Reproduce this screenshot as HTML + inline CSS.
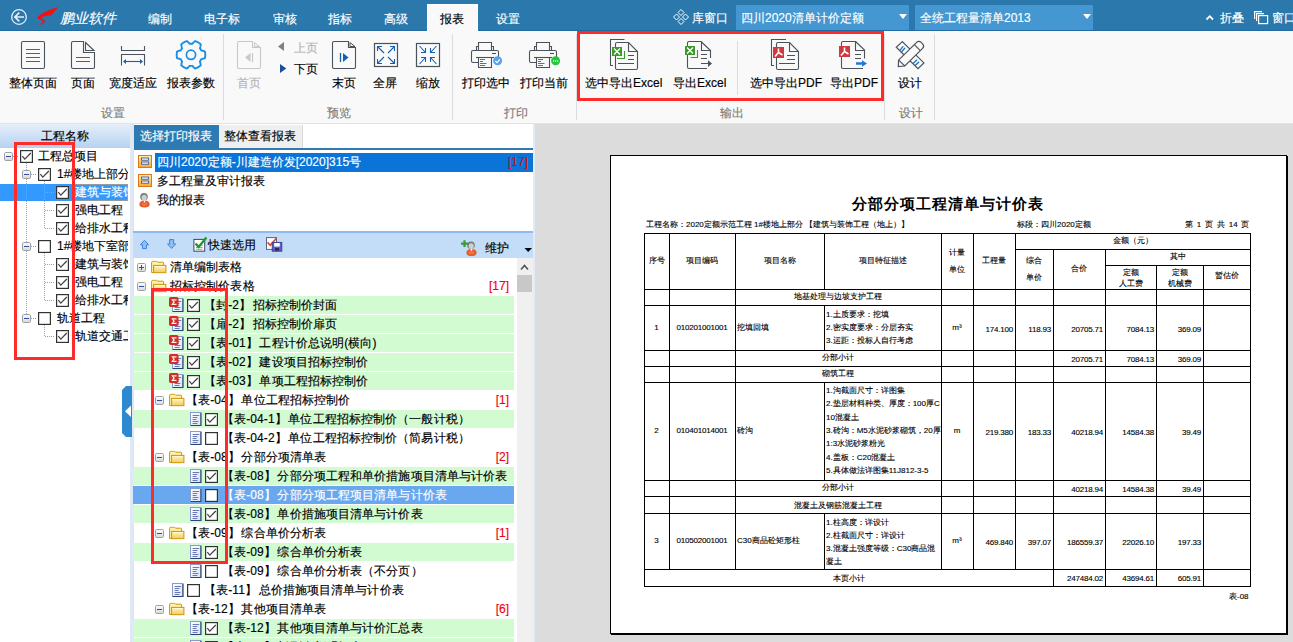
<!DOCTYPE html>
<html><head><meta charset="utf-8"><style>
*{box-sizing:border-box}
html,body{margin:0;padding:0}
body{width:1293px;height:642px;overflow:hidden;position:relative;background:#f9f9f9;font-family:"Liberation Sans",sans-serif;font-size:12px;color:#000}
.a{position:absolute}
.t{position:absolute;white-space:nowrap;line-height:14px;-webkit-text-stroke:0.15px currentColor}
.w{color:#fff}
.g{color:#7c7c7c}
.c{text-align:center}
.r{color:#f00010}
.d{position:absolute;white-space:nowrap;font-size:8px;line-height:10px;-webkit-text-stroke:0.12px #000}
.n{letter-spacing:-0.2px}
</style></head><body>
<div class="a" style="left:0px;top:0px;width:1293px;height:31px;background:#2a78ac;border-bottom:1px solid #1f6aa0"></div>
<div class="a" style="left:0px;top:31px;width:1293px;height:1px;background:#fff"></div>
<div class="a" style="left:427px;top:4px;width:51px;height:28px;background:#f9f9f9;border:1px solid #fff;border-bottom:none"></div>
<div class="a" style="left:736px;top:5px;width:173px;height:25px;background:#4497d0"></div>
<div class="a" style="left:915px;top:5px;width:178px;height:25px;background:#4497d0"></div>
<div class="a" style="left:0px;top:123px;width:1293px;height:1px;background:#e2e2e2"></div>
<div class="a" style="left:0px;top:124px;width:130px;height:518px;background:#fff"></div>
<div class="a" style="left:0px;top:124px;width:130px;height:24px;background:linear-gradient(#e6effa,#b6d2f1)"></div>
<div class="a" style="left:130px;top:124px;width:4px;height:518px;background:#dfe9f5"></div>
<div class="a" style="left:0px;top:184px;width:128px;height:17px;background:#3399ff"></div>
<div class="a" style="left:133px;top:124px;width:400px;height:518px;background:#fff"></div>
<div class="a" style="left:133px;top:124px;width:1px;height:518px;background:#d6e4f3"></div>
<div class="a" style="left:134px;top:125px;width:85px;height:23px;background:#2e7ab2"></div>
<div class="a" style="left:219px;top:125px;width:84px;height:23px;background:#efefef;border-right:1px solid #dadada"></div>
<div class="a" style="left:134px;top:148px;width:399px;height:2px;background:#2e7ab2"></div>
<div class="a" style="left:155px;top:153px;width:378px;height:19px;background:#0a74d8"></div>
<div class="a" style="left:133px;top:231px;width:400px;height:2px;background:#8ebaf0"></div>
<div class="a" style="left:133px;top:233px;width:400px;height:25px;background:#c3dcf7"></div>
<div class="a" style="left:517px;top:258px;width:16px;height:384px;background:#f0f0f0"></div>
<div class="a" style="left:517px;top:275px;width:15px;height:17px;background:#c8c8c8"></div>
<div class="a" style="left:533px;top:124px;width:2px;height:518px;background:#e3ecf6"></div>
<div class="a" style="left:535px;top:124px;width:758px;height:518px;background:#dcdcdc"></div>
<div class="a" style="left:610px;top:155px;width:677px;height:479px;background:#fff;border:1px solid #000;box-shadow:1px 1px 0 #000"></div>
<div class="a" style="left:133px;top:296px;width:381px;height:18px;background:#d2fbd2"></div>
<div class="a" style="left:133px;top:315px;width:381px;height:18px;background:#d2fbd2"></div>
<div class="a" style="left:133px;top:334px;width:381px;height:18px;background:#d2fbd2"></div>
<div class="a" style="left:133px;top:353px;width:381px;height:18px;background:#d2fbd2"></div>
<div class="a" style="left:133px;top:372px;width:381px;height:18px;background:#d2fbd2"></div>
<div class="a" style="left:133px;top:410px;width:381px;height:18px;background:#d2fbd2"></div>
<div class="a" style="left:133px;top:467px;width:381px;height:18px;background:#d2fbd2"></div>
<div class="a" style="left:133px;top:486px;width:381px;height:18px;background:#69a7ee"></div>
<div class="a" style="left:133px;top:505px;width:381px;height:18px;background:#d2fbd2"></div>
<div class="a" style="left:133px;top:543px;width:381px;height:18px;background:#d2fbd2"></div>
<div class="a" style="left:133px;top:619px;width:381px;height:18px;background:#d2fbd2"></div>
<div class="a" style="left:133px;top:638px;width:381px;height:18px;background:#d2fbd2"></div>
<div class="t w" style="left:60px;top:10px;font-size:14px;line-height:16px;font-style:italic">鹏业软件</div>
<div class="t w" style="left:148px;top:12px;">编制</div>
<div class="t w" style="left:204px;top:12px;">电子标</div>
<div class="t w" style="left:273px;top:12px;">审核</div>
<div class="t w" style="left:328px;top:12px;">指标</div>
<div class="t w" style="left:384px;top:12px;">高级</div>
<div class="t w" style="left:496px;top:12px;">设置</div>
<div class="t w" style="left:692px;top:11px;">库窗口</div>
<div class="t w" style="left:741px;top:11px;">四川2020清单计价定额</div>
<div class="t w" style="left:920px;top:11px;">全统工程量清单2013</div>
<div class="t w" style="left:1220px;top:11px;">折叠</div>
<div class="t w" style="left:1272px;top:11px;">窗口</div>
<div class="t " style="left:440px;top:12px;">报表</div>
<div class="t " style="left:9px;top:76px;">整体页面</div>
<div class="t " style="left:71px;top:76px;">页面</div>
<div class="t " style="left:109px;top:76px;">宽度适应</div>
<div class="t " style="left:167px;top:76px;">报表参数</div>
<div class="t " style="left:237px;top:76px;color:#b4b4b4">首页</div>
<div class="t " style="left:332px;top:76px;">末页</div>
<div class="t " style="left:373px;top:76px;">全屏</div>
<div class="t " style="left:416px;top:76px;">缩放</div>
<div class="t " style="left:462px;top:76px;">打印选中</div>
<div class="t " style="left:520px;top:76px;">打印当前</div>
<div class="t " style="left:585px;top:76px;">选中导出Excel</div>
<div class="t " style="left:673px;top:76px;">导出Excel</div>
<div class="t " style="left:750px;top:76px;">选中导出PDF</div>
<div class="t " style="left:830px;top:76px;">导出PDF</div>
<div class="t " style="left:898px;top:76px;">设计</div>
<div class="t " style="left:294px;top:41px;color:#b4b4b4">上页</div>
<div class="t " style="left:294px;top:62px;">下页</div>
<div class="t g" style="left:101px;top:106px;">设置</div>
<div class="t g" style="left:327px;top:106px;">预览</div>
<div class="t g" style="left:504px;top:106px;">打印</div>
<div class="t g" style="left:720px;top:106px;">输出</div>
<div class="t g" style="left:899px;top:106px;">设计</div>
<div class="t " style="left:41px;top:129px;">工程名称</div>
<div class="a" style="left:0;top:148px;width:128px;height:220px;overflow:hidden">
<div class="t " style="left:38px;top:1px;">工程总项目</div>
<div class="t " style="left:57px;top:19px;">1#楼地上部分</div>
<div class="t w" style="left:75px;top:37px;">建筑与装饰工程</div>
<div class="t " style="left:75px;top:55px;">强电工程</div>
<div class="t " style="left:75px;top:73px;">给排水工程</div>
<div class="t " style="left:57px;top:91px;">1#楼地下室部分</div>
<div class="t " style="left:75px;top:109px;">建筑与装饰工程</div>
<div class="t " style="left:75px;top:127px;">强电工程</div>
<div class="t " style="left:75px;top:145px;">给排水工程</div>
<div class="t " style="left:57px;top:163px;">轨道工程</div>
<div class="t " style="left:75px;top:181px;">轨道交通工程</div>
</div>
<div class="t w" style="left:140px;top:129px;">选择打印报表</div>
<div class="t " style="left:224px;top:129px;">整体查看报表</div>
<div class="t w" style="left:157px;top:155px;">四川2020定额-川建造价发[2020]315号</div>
<div class="t r" style="left:508px;top:155px;">[17]</div>
<div class="t " style="left:157px;top:174px;">多工程量及审计报表</div>
<div class="t " style="left:157px;top:193px;">我的报表</div>
<div class="t " style="left:208px;top:238px;">快速选用</div>
<div class="t " style="left:485px;top:241px;">维护</div>
<div class="a" style="left:133px;top:258px;width:384px;height:384px;overflow:hidden">
<div class="t " style="left:37px;top:2px;letter-spacing:0.1px">清单编制表格</div>
<div class="t " style="left:37px;top:21px;letter-spacing:0.1px">招标控制价表格</div>
<div class="t r" style="left:276px;top:21px;width:100px;text-align:right">[17]</div>
<div class="t " style="left:71px;top:40px;letter-spacing:0.1px">【封-2】<i style="margin-right:1.5px"></i>招标控制价封面</div>
<div class="t " style="left:71px;top:59px;letter-spacing:0.1px">【扉-2】<i style="margin-right:1.5px"></i>招标控制价扉页</div>
<div class="t " style="left:71px;top:78px;letter-spacing:0.1px">【表-01】<i style="margin-right:1.5px"></i>工程计价总说明(横向)</div>
<div class="t " style="left:71px;top:97px;letter-spacing:0.1px">【表-02】<i style="margin-right:1.5px"></i>建设项目招标控制价</div>
<div class="t " style="left:71px;top:116px;letter-spacing:0.1px">【表-03】<i style="margin-right:1.5px"></i>单项工程招标控制价</div>
<div class="t " style="left:53px;top:135px;letter-spacing:0.1px">【表-04】<i style="margin-right:1.5px"></i>单位工程招标控制价</div>
<div class="t r" style="left:276px;top:135px;width:100px;text-align:right">[1]</div>
<div class="t " style="left:89px;top:154px;letter-spacing:0.1px">【表-04-1】<i style="margin-right:1.5px"></i>单位工程招标控制价（一般计税）</div>
<div class="t " style="left:89px;top:173px;letter-spacing:0.1px">【表-04-2】<i style="margin-right:1.5px"></i>单位工程招标控制价（简易计税）</div>
<div class="t " style="left:53px;top:192px;letter-spacing:0.1px">【表-08】<i style="margin-right:1.5px"></i>分部分项清单表</div>
<div class="t r" style="left:276px;top:192px;width:100px;text-align:right">[2]</div>
<div class="t " style="left:89px;top:211px;letter-spacing:0.1px">【表-08】<i style="margin-right:1.5px"></i>分部分项工程和单价措施项目清单与计价表</div>
<div class="t w" style="left:89px;top:230px;letter-spacing:0.1px">【表-08】<i style="margin-right:1.5px"></i>分部分项工程项目清单与计价表</div>
<div class="t " style="left:89px;top:249px;letter-spacing:0.1px">【表-08】<i style="margin-right:1.5px"></i>单价措施项目清单与计价表</div>
<div class="t " style="left:53px;top:268px;letter-spacing:0.1px">【表-09】<i style="margin-right:1.5px"></i>综合单价分析表</div>
<div class="t r" style="left:276px;top:268px;width:100px;text-align:right">[1]</div>
<div class="t " style="left:89px;top:287px;letter-spacing:0.1px">【表-09】<i style="margin-right:1.5px"></i>综合单价分析表</div>
<div class="t " style="left:89px;top:306px;letter-spacing:0.1px">【表-09】<i style="margin-right:1.5px"></i>综合单价分析表（不分页）</div>
<div class="t " style="left:71px;top:325px;letter-spacing:0.1px">【表-11】<i style="margin-right:1.5px"></i>总价措施项目清单与计价表</div>
<div class="t " style="left:53px;top:344px;letter-spacing:0.1px">【表-12】<i style="margin-right:1.5px"></i>其他项目清单表</div>
<div class="t r" style="left:276px;top:344px;width:100px;text-align:right">[6]</div>
<div class="t " style="left:89px;top:363px;letter-spacing:0.1px">【表-12】<i style="margin-right:1.5px"></i>其他项目清单与计价汇总表</div>
<div class="t " style="left:89px;top:382px;letter-spacing:0.1px">【表-12】<i style="margin-right:1.5px"></i>暂列金额明细表</div>
</div>
<div class="t" style="left:852px;top:195px;font-size:15px;line-height:18px;letter-spacing:1px;font-weight:bold;-webkit-text-stroke:0">分部分项工程清单与计价表</div>
<div class="d" style="left:646px;top:220px;">工程名称：2020定额示范工程 1#楼地上部分 【建筑与装饰工程（地上）】</div>
<div class="d" style="left:1017px;top:220px;">标段：四川2020定额</div>
<div class="d" style="left:1185px;top:220px;word-spacing:1.6px">第 1 页 共 14 页</div>
<div class="d" style="left:1229px;top:592px;">表-08</div>
<div class="d" style="left:644px;top:256px;width:25px;text-align:center;">序号</div>
<div class="d" style="left:669px;top:256px;width:66px;text-align:center;">项目编码</div>
<div class="d" style="left:735px;top:256px;width:89px;text-align:center;">项目名称</div>
<div class="d" style="left:824px;top:256px;width:117px;text-align:center;">项目特征描述</div>
<div class="d" style="left:941px;top:248px;width:32px;text-align:center;">计量</div>
<div class="d" style="left:941px;top:265px;width:32px;text-align:center;">单位</div>
<div class="d" style="left:973px;top:256px;width:42px;text-align:center;">工程量</div>
<div class="d" style="left:1015px;top:236px;width:235px;text-align:center;">金额（元）</div>
<div class="d" style="left:1015px;top:256px;width:38px;text-align:center;">综合</div>
<div class="d" style="left:1015px;top:272.5px;width:38px;text-align:center;">单价</div>
<div class="d" style="left:1053px;top:264px;width:52px;text-align:center;">合价</div>
<div class="d" style="left:1105px;top:252px;width:145px;text-align:center;">其中</div>
<div class="d" style="left:1105px;top:267.5px;width:51px;text-align:center;">定额</div>
<div class="d" style="left:1105px;top:279px;width:51px;text-align:center;">人工费</div>
<div class="d" style="left:1156px;top:267.5px;width:47px;text-align:center;">定额</div>
<div class="d" style="left:1156px;top:279px;width:47px;text-align:center;">机械费</div>
<div class="d" style="left:1203px;top:271px;width:47px;text-align:center;">暂估价</div>
<div class="d" style="left:735px;top:292px;width:206px;text-align:center;">地基处理与边坡支护工程</div>
<div class="d" style="left:644px;top:323px;width:25px;text-align:center;">1</div>
<div class="d" style="left:669px;top:323px;width:66px;text-align:center;letter-spacing:-0.2px">010201001001</div>
<div class="d" style="left:737px;top:323px;">挖填回填</div>
<div class="d" style="left:826px;top:310px;">1.土质要求：挖填</div>
<div class="d" style="left:826px;top:323px;">2.密实度要求：分层夯实</div>
<div class="d" style="left:826px;top:336px;">3.运距：投标人自行考虑</div>
<div class="d" style="left:941px;top:323px;width:32px;text-align:center;">m³</div>
<div class="d n" style="left:935px;top:324.5px;width:78px;text-align:right">174.100</div>
<div class="d n" style="left:973px;top:324.5px;width:78px;text-align:right">118.93</div>
<div class="d n" style="left:1025px;top:324.5px;width:78px;text-align:right">20705.71</div>
<div class="d n" style="left:1076px;top:324.5px;width:78px;text-align:right">7084.13</div>
<div class="d n" style="left:1123px;top:324.5px;width:78px;text-align:right">369.09</div>
<div class="d" style="left:735px;top:353px;width:206px;text-align:center;">分部小计</div>
<div class="d n" style="left:1025px;top:354.5px;width:78px;text-align:right">20705.71</div>
<div class="d n" style="left:1076px;top:354.5px;width:78px;text-align:right">7084.13</div>
<div class="d n" style="left:1123px;top:354.5px;width:78px;text-align:right">369.09</div>
<div class="d" style="left:735px;top:369px;width:206px;text-align:center;">砌筑工程</div>
<div class="d" style="left:644px;top:426px;width:25px;text-align:center;">2</div>
<div class="d" style="left:669px;top:426px;width:66px;text-align:center;letter-spacing:-0.2px">010401014001</div>
<div class="d" style="left:737px;top:426px;">砖沟</div>
<div class="d" style="left:826px;top:386.0px;">1.沟截面尺寸：详图集</div>
<div class="d" style="left:826px;top:399.3px;">2.垫层材料种类、厚度：100厚C</div>
<div class="d" style="left:826px;top:412.6px;">10混凝土</div>
<div class="d" style="left:826px;top:425.9px;">3.砖沟：M5水泥砂浆砌筑，20厚</div>
<div class="d" style="left:826px;top:439.2px;">1:3水泥砂浆粉光</div>
<div class="d" style="left:826px;top:452.5px;">4.盖板：C20混凝土</div>
<div class="d" style="left:826px;top:465.8px;">5.具体做法详图集11J812-3-5</div>
<div class="d" style="left:941px;top:426px;width:32px;text-align:center;">m</div>
<div class="d n" style="left:935px;top:427.5px;width:78px;text-align:right">219.380</div>
<div class="d n" style="left:973px;top:427.5px;width:78px;text-align:right">183.33</div>
<div class="d n" style="left:1025px;top:427.5px;width:78px;text-align:right">40218.94</div>
<div class="d n" style="left:1076px;top:427.5px;width:78px;text-align:right">14584.38</div>
<div class="d n" style="left:1123px;top:427.5px;width:78px;text-align:right">39.49</div>
<div class="d" style="left:735px;top:483px;width:206px;text-align:center;">分部小计</div>
<div class="d n" style="left:1025px;top:484.5px;width:78px;text-align:right">40218.94</div>
<div class="d n" style="left:1076px;top:484.5px;width:78px;text-align:right">14584.38</div>
<div class="d n" style="left:1123px;top:484.5px;width:78px;text-align:right">39.49</div>
<div class="d" style="left:735px;top:500.5px;width:206px;text-align:center;">混凝土及钢筋混凝土工程</div>
<div class="d" style="left:644px;top:536px;width:25px;text-align:center;">3</div>
<div class="d" style="left:669px;top:536px;width:66px;text-align:center;letter-spacing:-0.2px">010502001001</div>
<div class="d" style="left:737px;top:536px;">C30商品砼矩形柱</div>
<div class="d" style="left:826px;top:518px;">1.柱高度：详设计</div>
<div class="d" style="left:826px;top:531px;">2.柱截面尺寸：详设计</div>
<div class="d" style="left:826px;top:544px;">3.混凝土强度等级：C30商品混</div>
<div class="d" style="left:826px;top:557px;">凝土</div>
<div class="d" style="left:941px;top:536px;width:32px;text-align:center;">m³</div>
<div class="d n" style="left:935px;top:537.5px;width:78px;text-align:right">469.840</div>
<div class="d n" style="left:973px;top:537.5px;width:78px;text-align:right">397.07</div>
<div class="d n" style="left:1025px;top:537.5px;width:78px;text-align:right">186559.37</div>
<div class="d n" style="left:1076px;top:537.5px;width:78px;text-align:right">22026.10</div>
<div class="d n" style="left:1123px;top:537.5px;width:78px;text-align:right">197.33</div>
<div class="d" style="left:644px;top:573.5px;width:409px;text-align:center;">本页小计</div>
<div class="d n" style="left:1025px;top:573.5px;width:78px;text-align:right">247484.02</div>
<div class="d n" style="left:1076px;top:573.5px;width:78px;text-align:right">43694.61</div>
<div class="d n" style="left:1123px;top:573.5px;width:78px;text-align:right">605.91</div>
<svg class="a" style="left:0;top:0" width="1293" height="642" viewBox="0 0 1293 642"><defs>
<symbol id="ck" viewBox="0 0 13 13" width="13" height="13"><rect x="0.6" y="0.6" width="11.8" height="11.8" fill="#fff" stroke="#333" stroke-width="1.2"/><path d="M2.3 6.2L4.8 9.1L10.8 3" fill="none" stroke="#444" stroke-width="1.3"/></symbol>
<symbol id="cb" viewBox="0 0 13 13" width="13" height="13"><rect x="0.6" y="0.6" width="11.8" height="11.8" fill="#fff" stroke="#333" stroke-width="1.2"/></symbol>
<linearGradient id="gx" x1="0" y1="0" x2="0" y2="1"><stop offset="0" stop-color="#fdfdfd"/><stop offset="1" stop-color="#d8d8d8"/></linearGradient>
<symbol id="mn" viewBox="0 0 9 9" width="9" height="9"><rect x="0.5" y="0.5" width="8" height="8" rx="1.2" fill="url(#gx)" stroke="#a0a0a0"/><path d="M2 4.5H7" stroke="#3050a8" stroke-width="1"/></symbol>
<symbol id="pl" viewBox="0 0 9 9" width="9" height="9"><rect x="0.5" y="0.5" width="8" height="8" rx="1.2" fill="url(#gx)" stroke="#a0a0a0"/><path d="M2 4.5H7M4.5 2V7" stroke="#3050a8" stroke-width="1"/></symbol>
<linearGradient id="gf" x1="0" y1="0" x2="0" y2="1"><stop offset="0" stop-color="#fff4c0"/><stop offset="1" stop-color="#f2cc5a"/></linearGradient>
<symbol id="fd" viewBox="0 0 16 13" width="16" height="13"><path d="M0.6 12V2.1Q0.6 0.7 1.8 0.7H5.6L6.6 1.7H11.8Q12.6 1.7 12.6 2.5V12Z" fill="#fff2a8" stroke="#c99512" stroke-width="1"/><rect x="2.6" y="4.9" width="12.3" height="7.4" fill="url(#gf)" stroke="#c99512" stroke-width="1"/><path d="M3.6 6.2H13.8" stroke="#fffbe8" stroke-width="0.8"/></symbol>
<linearGradient id="gd" x1="0" y1="0" x2="1" y2="1"><stop offset="0" stop-color="#ffffff"/><stop offset="1" stop-color="#d8e2fa"/></linearGradient>
<symbol id="doc" viewBox="0 0 12 14" width="12" height="14"><rect x="0.5" y="0.5" width="10.5" height="13" fill="url(#gd)" stroke="#8a9ad0"/><path d="M10.9 1V13.5H0.8" fill="none" stroke="#2c4474" stroke-width="1.1"/><path d="M2.6 3.5H9.2M2.6 5.5H7.4M2.6 7.5H6.5M2.6 9.5H8.4M2.6 11.5H7.4" stroke="#5a6aac" stroke-width="0.9"/></symbol>
<symbol id="sig" viewBox="0 0 15 15" width="15" height="15"><use href="#doc" x="3" y="1"/><rect x="0" y="0" width="9.5" height="10" rx="1.8" fill="#d42a2a"/><path d="M2.2 2.2H7.5V3.4H4.3L6 5.1L4.3 6.8H7.5V8H2.2L4.2 5.1Z" fill="#fff6e0"/></symbol>
<linearGradient id="go" x1="0" y1="0" x2="0" y2="1"><stop offset="0" stop-color="#fff0a8"/><stop offset="1" stop-color="#f8a830"/></linearGradient>
<symbol id="rep" viewBox="0 0 14 13" width="14" height="13"><rect x="0.5" y="0.5" width="13" height="12" fill="url(#go)" stroke="#e07818"/><rect x="3.5" y="3" width="7" height="2.2" fill="#fff" stroke="#3a5aa8" stroke-width="0.9"/><rect x="3.5" y="7" width="7" height="2.2" fill="#fff" stroke="#3a5aa8" stroke-width="0.9"/></symbol>
<symbol id="usr" viewBox="0 0 12 16" width="12" height="16"><path d="M0.4 11.8Q0.4 7.9 5.5 7.9Q10.6 7.9 10.6 11.8Q10.6 15 5.5 15Q0.4 15 0.4 11.8Z" fill="#e35b2c"/><ellipse cx="5.5" cy="11.5" rx="3" ry="2" fill="#f08050" opacity="0.6"/><circle cx="5" cy="4.2" r="3.8" fill="#7a7a7a"/><ellipse cx="5.2" cy="5.1" rx="2.6" ry="2.9" fill="#cfcfcf"/><path d="M4.3 7.9L5.5 10.3L6.7 7.9Z" fill="#fff"/></symbol>
</defs><path d="M223.5 34V120" stroke="#dcdcdc"/><path d="M452.5 34V120" stroke="#dcdcdc"/><path d="M576.5 34V120" stroke="#dcdcdc"/><path d="M884.5 34V120" stroke="#dcdcdc"/><path d="M934.5 34V120" stroke="#dcdcdc"/><path d="M737.5 41V95" stroke="#dcdcdc"/><rect x="21.5" y="41.5" width="23" height="27" rx="1.5" fill="none" stroke="#4b525a" stroke-width="1.1"/><path d="M26 49.5H40M26 53.5H40M26 57.5H40M26 61.5H40" stroke="#1a6fb8" stroke-width="1.1"/><path d="M83.5 41.5H73Q71.5 41.5 71.5 43V67Q71.5 68.5 73 68.5H93Q94.5 68.5 94.5 67V52.5H83.5Z" fill="none" stroke="#4b525a" stroke-width="1.1"/><path d="M85.5 42.5L94 50.5H85.5Z" fill="none" stroke="#4b525a" stroke-width="1.1"/><path d="M76 57.5H90M76 61.5H90" stroke="#1a6fb8" stroke-width="1.1"/><path d="M121.5 46V50.5H144.5V46M121.5 65.5V54.5H144.5V65.5" fill="none" stroke="#4b525a" stroke-width="1.1"/><path d="M124 61.5H142" stroke="#1560b0" stroke-width="1.1"/><path d="M123 61.5L126 59V64Z M143 61.5L140 59V64Z" fill="#1560b0"/><path d="M205.30 54.80 L205.30 55.05 L205.29 55.30 L205.28 55.55 L205.27 55.80 L205.25 56.05 L205.22 56.29 L205.19 56.54 L205.16 56.79 L205.12 57.04 L205.08 57.28 L205.04 57.53 L204.99 57.77 L204.93 58.02 L204.56 58.18 L204.19 58.34 L203.82 58.48 L203.45 58.61 L203.08 58.72 L202.71 58.83 L202.33 58.92 L201.96 59.01 L201.59 59.08 L201.22 59.14 L201.14 59.31 L201.06 59.49 L200.98 59.67 L200.89 59.84 L200.80 60.01 L200.71 60.18 L200.61 60.35 L200.51 60.52 L200.41 60.68 L200.31 60.85 L200.20 61.01 L200.09 61.17 L199.98 61.32 L199.86 61.48 L200.00 61.83 L200.12 62.19 L200.24 62.55 L200.34 62.92 L200.44 63.30 L200.52 63.68 L200.60 64.07 L200.66 64.46 L200.71 64.86 L200.75 65.26 L200.57 65.43 L200.38 65.59 L200.19 65.75 L200.00 65.91 L199.80 66.07 L199.61 66.22 L199.41 66.37 L199.20 66.51 L199.00 66.66 L198.79 66.79 L198.58 66.93 L198.37 67.06 L198.15 67.18 L197.93 67.31 L197.71 67.43 L197.49 67.54 L197.27 67.65 L197.04 67.76 L196.82 67.86 L196.59 67.96 L196.36 68.06 L196.12 68.15 L195.89 68.24 L195.66 68.32 L195.42 68.40 L195.18 68.48 L194.85 68.24 L194.54 67.99 L194.23 67.74 L193.93 67.49 L193.64 67.22 L193.36 66.95 L193.09 66.68 L192.84 66.40 L192.59 66.11 L192.35 65.82 L192.16 65.84 L191.97 65.86 L191.77 65.87 L191.58 65.88 L191.39 65.89 L191.19 65.90 L191.00 65.90 L190.81 65.90 L190.61 65.89 L190.42 65.88 L190.23 65.87 L190.03 65.86 L189.84 65.84 L189.65 65.82 L189.41 66.11 L189.16 66.40 L188.91 66.68 L188.64 66.95 L188.36 67.22 L188.07 67.49 L187.77 67.74 L187.46 67.99 L187.15 68.24 L186.82 68.48 L186.58 68.40 L186.34 68.32 L186.11 68.24 L185.88 68.15 L185.64 68.06 L185.41 67.96 L185.18 67.86 L184.96 67.76 L184.73 67.65 L184.51 67.54 L184.29 67.43 L184.07 67.31 L183.85 67.18 L183.63 67.06 L183.42 66.93 L183.21 66.79 L183.00 66.66 L182.80 66.51 L182.59 66.37 L182.39 66.22 L182.20 66.07 L182.00 65.91 L181.81 65.75 L181.62 65.59 L181.43 65.43 L181.25 65.26 L181.29 64.86 L181.34 64.46 L181.40 64.07 L181.48 63.68 L181.56 63.30 L181.66 62.92 L181.76 62.55 L181.88 62.19 L182.00 61.83 L182.14 61.48 L182.02 61.32 L181.91 61.17 L181.80 61.01 L181.69 60.85 L181.59 60.68 L181.49 60.52 L181.39 60.35 L181.29 60.18 L181.20 60.01 L181.11 59.84 L181.02 59.67 L180.94 59.49 L180.86 59.31 L180.78 59.14 L180.41 59.08 L180.04 59.01 L179.67 58.92 L179.29 58.83 L178.92 58.72 L178.55 58.61 L178.18 58.48 L177.81 58.34 L177.44 58.18 L177.07 58.02 L177.01 57.77 L176.96 57.53 L176.92 57.28 L176.88 57.04 L176.84 56.79 L176.81 56.54 L176.78 56.29 L176.75 56.05 L176.73 55.80 L176.72 55.55 L176.71 55.30 L176.70 55.05 L176.70 54.80 L176.70 54.55 L176.71 54.30 L176.72 54.05 L176.73 53.80 L176.75 53.55 L176.78 53.31 L176.81 53.06 L176.84 52.81 L176.88 52.56 L176.92 52.32 L176.96 52.07 L177.01 51.83 L177.07 51.58 L177.44 51.42 L177.81 51.26 L178.18 51.12 L178.55 50.99 L178.92 50.88 L179.29 50.77 L179.67 50.68 L180.04 50.59 L180.41 50.52 L180.78 50.46 L180.86 50.29 L180.94 50.11 L181.02 49.93 L181.11 49.76 L181.20 49.59 L181.29 49.42 L181.39 49.25 L181.49 49.08 L181.59 48.92 L181.69 48.75 L181.80 48.59 L181.91 48.43 L182.02 48.28 L182.14 48.12 L182.00 47.77 L181.88 47.41 L181.76 47.05 L181.66 46.68 L181.56 46.30 L181.48 45.92 L181.40 45.53 L181.34 45.14 L181.29 44.74 L181.25 44.34 L181.43 44.17 L181.62 44.01 L181.81 43.85 L182.00 43.69 L182.20 43.53 L182.39 43.38 L182.59 43.23 L182.80 43.09 L183.00 42.94 L183.21 42.81 L183.42 42.67 L183.63 42.54 L183.85 42.42 L184.07 42.29 L184.29 42.17 L184.51 42.06 L184.73 41.95 L184.96 41.84 L185.18 41.74 L185.41 41.64 L185.64 41.54 L185.88 41.45 L186.11 41.36 L186.34 41.28 L186.58 41.20 L186.82 41.12 L187.15 41.36 L187.46 41.61 L187.77 41.86 L188.07 42.11 L188.36 42.38 L188.64 42.65 L188.91 42.92 L189.16 43.20 L189.41 43.49 L189.65 43.78 L189.84 43.76 L190.03 43.74 L190.23 43.73 L190.42 43.72 L190.61 43.71 L190.81 43.70 L191.00 43.70 L191.19 43.70 L191.39 43.71 L191.58 43.72 L191.77 43.73 L191.97 43.74 L192.16 43.76 L192.35 43.78 L192.59 43.49 L192.84 43.20 L193.09 42.92 L193.36 42.65 L193.64 42.38 L193.93 42.11 L194.23 41.86 L194.54 41.61 L194.85 41.36 L195.18 41.12 L195.42 41.20 L195.66 41.28 L195.89 41.36 L196.12 41.45 L196.36 41.54 L196.59 41.64 L196.82 41.74 L197.04 41.84 L197.27 41.95 L197.49 42.06 L197.71 42.17 L197.93 42.29 L198.15 42.42 L198.37 42.54 L198.58 42.67 L198.79 42.81 L199.00 42.94 L199.20 43.09 L199.41 43.23 L199.61 43.38 L199.80 43.53 L200.00 43.69 L200.19 43.85 L200.38 44.01 L200.57 44.17 L200.75 44.34 L200.71 44.74 L200.66 45.14 L200.60 45.53 L200.52 45.92 L200.44 46.30 L200.34 46.68 L200.24 47.05 L200.12 47.41 L200.00 47.77 L199.86 48.12 L199.98 48.28 L200.09 48.43 L200.20 48.59 L200.31 48.75 L200.41 48.92 L200.51 49.08 L200.61 49.25 L200.71 49.42 L200.80 49.59 L200.89 49.76 L200.98 49.93 L201.06 50.11 L201.14 50.29 L201.22 50.46 L201.59 50.52 L201.96 50.59 L202.33 50.68 L202.71 50.77 L203.08 50.88 L203.45 50.99 L203.82 51.12 L204.19 51.26 L204.56 51.42 L204.93 51.58 L204.99 51.83 L205.04 52.07 L205.08 52.32 L205.12 52.56 L205.16 52.81 L205.19 53.06 L205.22 53.31 L205.25 53.55 L205.27 53.80 L205.28 54.05 L205.29 54.30 L205.30 54.55Z" fill="none" stroke="#1a8ee0" stroke-width="1.9" stroke-linejoin="round"/><circle cx="191" cy="54.8" r="4.6" fill="none" stroke="#1a8ee0" stroke-width="1.7"/><path d="M252.5 41.5H239Q237.5 41.5 237.5 43V67Q237.5 68.5 239 68.5H259Q260.5 68.5 260.5 67V47.5H252.5Z" fill="none" stroke="#c8c8c8" stroke-width="1.1"/><path d="M254.5 42.5L259.5 46.5H254.5Z" fill="none" stroke="#c8c8c8" stroke-width="1"/><path d="M250.5 53V62L245 57.5Z" fill="#c8c8c8"/><path d="M252.5 53V62" stroke="#c8c8c8" stroke-width="1.2"/><path d="M284 42V51L278 46.5Z" fill="#808080"/><path d="M280 64V73L286.3 68.5Z" fill="#1a4f9a"/><path d="M348.5 41.5H334Q332.5 41.5 332.5 43V67Q332.5 68.5 334 68.5H354Q355.5 68.5 355.5 67V47.5H348.5Z" fill="none" stroke="#4b525a" stroke-width="1.1"/><path d="M350 42.5L355 46.5H350Z" fill="none" stroke="#4b525a" stroke-width="1"/><path d="M340.5 53V62" stroke="#1560b0" stroke-width="1.3"/><path d="M343 53V62L348.5 57.5Z" fill="#1560b0"/><rect x="374.5" y="43.5" width="23" height="23" fill="none" stroke="#4b525a" stroke-width="1.2"/><g stroke="#1560b0" stroke-width="1.1" fill="none"><path d="M377.5 51V46.5H382M377.5 46.5L384 53"/><path d="M394.5 51V46.5H390M394.5 46.5L388 53"/><path d="M377.5 59V63.5H382M377.5 63.5L384 57"/><path d="M394.5 59V63.5H390M394.5 63.5L388 57"/></g><rect x="416.5" y="43.5" width="23" height="23" fill="none" stroke="#4b525a" stroke-width="1.2"/><g stroke="#1560b0" stroke-width="1.1" fill="none"><path d="M419.5 46L425.5 52.5M425.5 48V52.5H421"/><path d="M436.5 46L430.5 52.5M430.5 48V52.5H435"/><path d="M419.5 64L425.5 57.5M425.5 62V57.5H421"/><path d="M436.5 64L430.5 57.5M430.5 62V57.5H435"/></g><g transform="translate(0,0)"><path d="M478.5 50V42.5H491.5V50" fill="none" stroke="#4b525a" stroke-width="1.1"/><path d="M476.5 50V46.5H478.5M491.5 46.5H493.5V50" fill="none" stroke="#4b525a" stroke-width="1.1"/><path d="M478 62.5H473Q471.5 62.5 471.5 61V52Q471.5 50.5 473 50.5H497Q498.5 50.5 498.5 52V59" fill="none" stroke="#4b525a" stroke-width="1.1"/><path d="M476 57.5H494" stroke="#4b525a" stroke-width="1.1"/><path d="M478.5 57.5V67.5H491.5V57.5" fill="none" stroke="#4b525a" stroke-width="1.1"/><path d="M492 53.5H496" stroke="#4b525a" stroke-width="1.1"/><path d="M480 59.5H485M480 61.5H483M480 63.5H486.5M480 65.5H485" stroke="#1a6fb8" stroke-width="0.9"/><circle cx="497.6" cy="60.8" r="4.5" fill="#5aa0f0"/><path d="M495.3 60.9L497 62.6L500 59.4" fill="none" stroke="#fff" stroke-width="1.2"/></g><g transform="translate(58,0)"><path d="M478.5 50V42.5H491.5V50" fill="none" stroke="#4b525a" stroke-width="1.1"/><path d="M476.5 50V46.5H478.5M491.5 46.5H493.5V50" fill="none" stroke="#4b525a" stroke-width="1.1"/><path d="M478 62.5H473Q471.5 62.5 471.5 61V52Q471.5 50.5 473 50.5H497Q498.5 50.5 498.5 52V59" fill="none" stroke="#4b525a" stroke-width="1.1"/><path d="M476 57.5H494" stroke="#4b525a" stroke-width="1.1"/><path d="M478.5 57.5V67.5H491.5V57.5" fill="none" stroke="#4b525a" stroke-width="1.1"/><path d="M492 53.5H496" stroke="#4b525a" stroke-width="1.1"/><path d="M480 59.5H485M480 61.5H483M480 63.5H486.5M480 65.5H485" stroke="#1a6fb8" stroke-width="0.9"/><circle cx="497.6" cy="60.8" r="4.5" fill="#22c83a"/><circle cx="495.6" cy="61" r="0.7" fill="#fff"/><circle cx="497.6" cy="61" r="0.7" fill="#fff"/><circle cx="499.6" cy="61" r="0.7" fill="#fff"/></g><path d="M624.5 39.5H610.5V65.5H613" fill="none" stroke="#4b525a" stroke-width="1.1"/><path d="M628.5 42.5H617Q615.5 42.5 615.5 44V68Q615.5 69.5 617 69.5H636Q637.5 69.5 637.5 68V51.5Z" fill="#f9f9f9" stroke="#4b525a" stroke-width="1.1"/><path d="M628.5 42.5V51.5H637.5" fill="none" stroke="#4b525a" stroke-width="1.1"/><path d="M628 55.5H634M628 59.5H634M618 63.5H634" stroke="#4b525a" stroke-width="1.1"/><rect x="612" y="47" width="10" height="9" fill="#3a9a2a"/><path d="M614 48.5L620 54.5M620 48.5L614 54.5" stroke="#fff" stroke-width="1.3"/><path d="M624.5 51V58.5H617" fill="none" stroke="#3a9a2a" stroke-width="1.1"/><path d="M701 41.5H689Q687.5 41.5 687.5 43V67Q687.5 68.5 689 68.5H707M710.5 58V50.5L701 41.5" fill="none" stroke="#4b525a" stroke-width="1.1"/><path d="M701.5 41.5V50.5H710.5" fill="none" stroke="#4b525a" stroke-width="1.1"/><path d="M701 54.5H707M701 58.5H707M701 63.5H708.5" stroke="#4b525a" stroke-width="1.1"/><path d="M708 60.3L712 63.5L708 67Z" fill="#4b525a"/><rect x="685" y="46" width="10" height="9" fill="#3a9a2a"/><path d="M687 47.5L693 53.5M693 47.5L687 53.5" stroke="#fff" stroke-width="1.3"/><path d="M697.5 50V57.5H690.5" fill="none" stroke="#3a9a2a" stroke-width="1.1"/><path d="M786 39.5H771.5V65.5H774" fill="none" stroke="#4b525a" stroke-width="1.1"/><path d="M789.5 42.5H778Q776.5 42.5 776.5 44V68Q776.5 69.5 778 69.5H797Q798.5 69.5 798.5 68V51.5Z" fill="#f9f9f9" stroke="#4b525a" stroke-width="1.1"/><path d="M789.5 42.5V51.5H798.5" fill="none" stroke="#4b525a" stroke-width="1.1"/><path d="M787 55.5H795M787 59.5H795M779 63.5H795" stroke="#4b525a" stroke-width="1.1"/><rect x="773" y="47" width="11" height="11" fill="#d03a3e"/><path d="M778.5 48.5V52.5M778.5 52.5L775 56.5M778.5 52.5L782.5 55" stroke="#fff" stroke-width="1.6" fill="none"/><path d="M855.5 41.5H843Q841.5 41.5 841.5 43V67Q841.5 68.5 843 68.5H863M864.5 58.5V50L855.5 41.5" fill="none" stroke="#4b525a" stroke-width="1.1"/><path d="M855.5 41.5V50.5H864.5" fill="none" stroke="#4b525a" stroke-width="1.1"/><path d="M855 54.5H861M855 58.5H861" stroke="#4b525a" stroke-width="1.1"/><path d="M856 62.3H862V60.3L867 63.6L862 66.8V64.8H856Z" fill="#1a78e0"/><rect x="839" y="46" width="11" height="11" fill="#d03a3e"/><path d="M844.5 47.5V51.5M844.5 51.5L841 55.5M844.5 51.5L848.5 54" stroke="#fff" stroke-width="1.6" fill="none"/><path d="M902.3 41.6L896.3 47.2L918 68.6L923.9 62.9Z" fill="none" stroke="#4b525a" stroke-width="1.2"/><path d="M900.2 49.8L902.9 46.6M901.9 51.5L904.7 48.3M913.4 63.2L916.8 60.1M915.4 65.2L918.7 62.3" stroke="#1a70c0" stroke-width="1.3" stroke-linecap="round"/><path d="M898.6 60.1L916.6 42.4Q918.9 40.2 921.2 42.4L922.6 43.8Q924.8 46.1 922.6 48.3L904.8 66Z" fill="#f9f9f9" stroke="#4b525a" stroke-width="1.2"/><path d="M898.6 60.1L898.3 66.6L904.8 66M914.6 44.9L920.3 50.6" fill="none" stroke="#4b525a" stroke-width="1.2"/><circle cx="19" cy="17" r="7.3" fill="none" stroke="#e8eef4" stroke-width="1.3"/><path d="M24 17H15.5M19.3 12.6L14.9 17L19.3 21.4" fill="none" stroke="#e8eef4" stroke-width="1.7"/><path d="M58.2 7 C53 8.5 44 11.5 38.6 16 C36.8 17.6 37.4 18.9 40 19.7 C43 20.6 43.8 21.6 42 23 C41 23.8 39.5 24.4 37.8 24.9 C41.5 24.7 44.6 23.4 44.9 21.5 C45.1 19.8 42.2 19 40.6 18.2 C44 16 47.5 15 51 15.6 C53.5 12.6 56 9.6 58.2 7Z" fill="#f51010"/><g fill="none" stroke="#fff" stroke-width="1"><path d="M681 9.5L684 12.5L681 15.5L678 12.5Z"/><path d="M681 18.5L684 21.5L681 24.5L678 21.5Z"/><path d="M676.5 14L679.5 17L676.5 20L673.5 17Z"/><path d="M685.5 14L688.5 17L685.5 20L682.5 17Z"/></g><path d="M899 14H907L903 19Z" fill="#fff"/><path d="M1083 14H1091L1087 19Z" fill="#fff"/><path d="M1206.5 19.5L1209.8 16.2L1213 19.5" fill="none" stroke="#fff" stroke-width="1.8"/><g fill="none" stroke="#fff" stroke-width="1.2"><path d="M1254.6 19V11.6H1262"/><path d="M1256.6 21V13.6H1264"/><rect x="1258.6" y="15.6" width="9" height="8"/></g><g stroke="#a0a0a0" stroke-width="1" stroke-dasharray="1 1"><path d="M26.5 163V318M27 174.5H37M27 246.5H37M27 318.5H37"/><path d="M44.5 181V228M45 192.5H55M45 210.5H55M45 228.5H55"/><path d="M44.5 253V300M45 264.5H55M45 282.5H55M45 300.5H55"/><path d="M44.5 325V336M45 336.5H55"/><path d="M13 156.5H19"/></g><use href="#mn" x="4" y="152"/><use href="#ck" x="20" y="150"/><use href="#mn" x="22" y="170"/><use href="#ck" x="38" y="168"/><use href="#ck" x="56" y="186"/><use href="#ck" x="56" y="204"/><use href="#ck" x="56" y="222"/><use href="#mn" x="22" y="242"/><use href="#cb" x="38" y="240"/><use href="#ck" x="56" y="258"/><use href="#ck" x="56" y="276"/><use href="#ck" x="56" y="294"/><use href="#mn" x="22" y="314"/><use href="#cb" x="38" y="312"/><use href="#ck" x="56" y="330"/><rect x="74.5" y="184.5" width="53" height="16" fill="none" stroke="#f0a040" stroke-width="1" stroke-dasharray="1 1"/><use href="#rep" x="138" y="155"/><use href="#rep" x="138" y="174"/><use href="#usr" x="139" y="192.5"/><path d="M144.5 240.3L148.6 244.8H146.5V248.6H142.5V244.8H140.4Z" fill="#8cc0f8" stroke="#3a78d8" stroke-width="0.9" stroke-linejoin="round"/><path d="M171.6 248.4L175.7 243.9H173.6V239.6H169.6V243.9H167.5Z" fill="#8cc0f8" stroke="#3a78d8" stroke-width="0.9" stroke-linejoin="round"/><rect x="193.9" y="239.4" width="10.8" height="11.8" fill="#fff" stroke="#3a4466" stroke-width="1"/><path d="M196 245.5H202.5M196 247.5H202.5M196 249.3H202.5" stroke="#6a80c0" stroke-width="0.8"/><path d="M195.6 243.4L198.6 247L206.4 237.6" fill="none" stroke="#1f9a1f" stroke-width="2.3"/><rect x="266.5" y="237.6" width="10" height="11.8" fill="#fff" stroke="#5a6488" stroke-width="1"/><path d="M267.6 242.4L270.2 245.2L276.4 238.2" fill="none" stroke="#e84020" stroke-width="1.6"/><rect x="272.2" y="242.4" width="9.6" height="8.8" fill="#5b5fc8" stroke="#343c90" stroke-width="0.9"/><rect x="274.2" y="243" width="5.6" height="3.6" fill="#fff"/><rect x="275" y="248" width="4" height="2.6" fill="#2a2a60"/><use href="#usr" x="466" y="241"/><path d="M461 243.6H468M464.5 240.2V247" stroke="#3a9a3a" stroke-width="2.2"/><path d="M524.5 248H532L528.2 252Z" fill="#000"/><path d="M521 269.5L524.5 265.5L528 269.5" fill="none" stroke="#505050" stroke-width="1.5"/><use href="#pl" x="137" y="263"/><use href="#fd" x="151" y="260.5"/><use href="#mn" x="137" y="282"/><use href="#fd" x="151" y="279.5"/><use href="#sig" x="169" y="297"/><use href="#ck" x="187" y="299"/><use href="#sig" x="169" y="316"/><use href="#ck" x="187" y="318"/><use href="#sig" x="169" y="335"/><use href="#ck" x="187" y="337"/><use href="#sig" x="169" y="354"/><use href="#ck" x="187" y="356"/><use href="#sig" x="169" y="373"/><use href="#ck" x="187" y="375"/><use href="#mn" x="155" y="396"/><use href="#fd" x="169" y="393.5"/><use href="#doc" x="190" y="412"/><use href="#ck" x="205" y="413"/><use href="#doc" x="190" y="431"/><use href="#cb" x="205" y="432"/><use href="#mn" x="155" y="453"/><use href="#fd" x="169" y="450.5"/><use href="#doc" x="190" y="469"/><use href="#ck" x="205" y="470"/><use href="#doc" x="190" y="488"/><use href="#cb" x="205" y="489"/><use href="#doc" x="190" y="507"/><use href="#ck" x="205" y="508"/><use href="#mn" x="155" y="529"/><use href="#fd" x="169" y="526.5"/><use href="#doc" x="190" y="545"/><use href="#ck" x="205" y="546"/><use href="#doc" x="190" y="564"/><use href="#cb" x="205" y="565"/><use href="#doc" x="172" y="583"/><use href="#cb" x="187" y="584"/><use href="#mn" x="155" y="605"/><use href="#fd" x="169" y="602.5"/><use href="#doc" x="190" y="621"/><use href="#ck" x="205" y="622"/><use href="#doc" x="190" y="640"/><use href="#ck" x="205" y="641"/><path d="M126 386H132V437H126L122 433V390Z" fill="#2e8ad0"/><path d="M131 405.5V417L125 411.2Z" fill="#fff"/><path d="M644 233.5H1251M1015 249.5H1251M1105 265.5H1251M644 289.5H1251M644 305.5H1251M644 350.5H1251M644 366.5H1251M644 382.5H1251M644 480.5H1251M644 496.5H1251M644 513.5H1251M644 569.5H1251M644 586.5H1251M644.5 233V587M1250.5 233V587M669.5 233V570M735.5 233V570M941.5 233V570M973.5 233V570M1015.5 233V570M824.5 233V290M824.5 305V351M824.5 382V481M824.5 513V570M1053.5 249V587M1105.5 249V587M1156.5 265V587M1203.5 265V587" stroke="#000" stroke-width="1" fill="none"/><g fill="none" stroke="#ff2a2a" stroke-width="3"><rect x="578.5" y="32.5" width="304" height="67"/><rect x="15.5" y="143.5" width="58" height="215"/><rect x="152.5" y="289.5" width="74" height="273"/></g></svg>
</body></html>
